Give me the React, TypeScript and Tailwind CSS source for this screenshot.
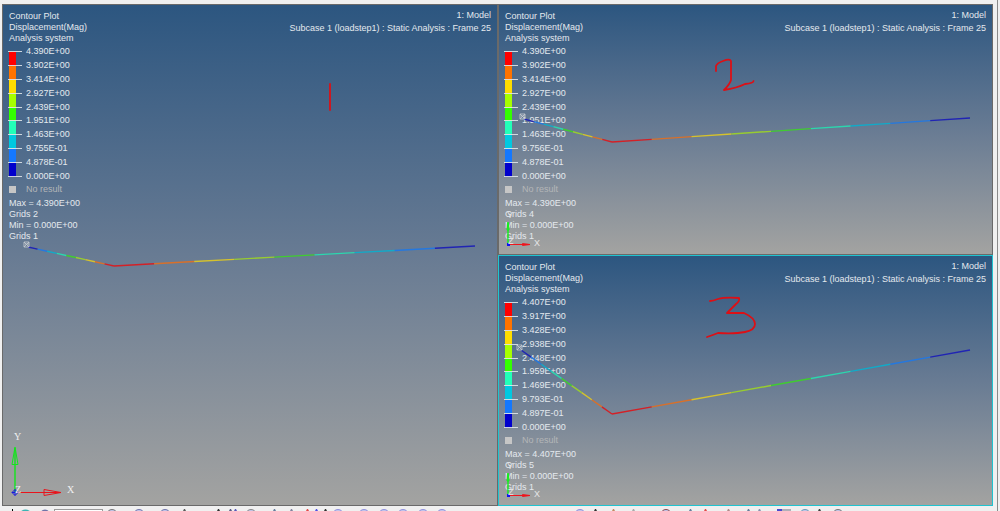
import { clsx } from 'clsx';

type Point = [number, number];

interface Axis {
  size: 'large' | 'small';
}

interface ViewportProps {
  levels: string[];
  max: string;
  maxGrid: string;
  min: string;
  minGrid: string;
  box: Point;
  curve: [Point, Point, Point];
  note: string;
  axis: Axis['size'];
  active?: boolean;
  className?: string;
}

const bands = [
  'bg-[#ff0000]',
  'bg-[#ff7300]',
  'bg-[#ffdd00]',
  'bg-[#a6ff00]',
  'bg-[#33ff00]',
  'bg-[#22ffb8]',
  'bg-[#00c8e0]',
  'bg-[#1478ff]',
  'bg-[#0000cc]',
];

// line colours, highest displacement first
const strokes = ['#d42026', '#d8702a', '#d6c22c', '#98cc30', '#40cc30', '#2cd6ae', '#12aac8', '#2478e0', '#2024b4'];

function Legend({ levels }: { levels: string[] }) {
  return (
    <div className="flex h-[139px] pt-px">
      <div className="relative -ml-px w-3.5">
        <div className="mt-[7px] ml-px flex h-[125px] w-[7px] flex-col">
          {bands.map((band) => (
            <div key={band} className={clsx('flex-1', band)} />
          ))}
        </div>
        <div className="absolute inset-x-0 top-[6px] flex h-[126px] flex-col justify-between">
          {levels.map((level) => (
            <div key={level} className="h-px bg-[#dfe4e8]/90" />
          ))}
        </div>
      </div>
      <ul className="ml-1 flex flex-col justify-between leading-[13px]">
        {levels.map((level) => (
          <li key={level}>{level}</li>
        ))}
      </ul>
    </div>
  );
}

function Curve({ box, curve, note }: { box: Point; curve: [Point, Point, Point]; note: string }) {
  const [start, low, end] = curve;
  const segments = [start, end].flatMap(([x, y]) =>
    strokes.map((color, i) => {
      const a = i / strokes.length;
      const b = (i + 1) / strokes.length;
      return {
        color,
        x1: low[0] + (x - low[0]) * a,
        y1: low[1] + (y - low[1]) * a,
        x2: low[0] + (x - low[0]) * b,
        y2: low[1] + (y - low[1]) * b,
      };
    }),
  );

  return (
    <svg
      className="absolute inset-0 h-full w-full"
      viewBox={`0 0 ${box[0]} ${box[1]}`}
      preserveAspectRatio="none"
      fill="none"
      aria-hidden="true"
    >
      {segments.map(({ color, ...line }, i) => (
        <line key={i} {...line} stroke={color} strokeWidth="1.4" />
      ))}
      {/* Constraint marker */}
      <g transform={`translate(${start[0]} ${start[1]})`} stroke="#c9cdd2" strokeWidth="0.8">
        <path d="M-4 -5 L1 0 M1 -5 L-4 0 M-4 -5 H1 M-4 0 H1 M-4 -5 V0 M1 -5 V0 M-3 -3 H1" />
      </g>
      <path d={note} stroke="#dc1016" strokeWidth="1.8" strokeLinecap="round" strokeLinejoin="round" />
    </svg>
  );
}

function AxisTriad({ size }: Axis) {
  if (size === 'large') {
    return (
      <svg className="absolute bottom-0 left-0 h-20 w-24 font-['Liberation_Serif',serif]" viewBox="0 0 96 80" fill="none" aria-hidden="true">
        <path d="M12 67 V23" stroke="#12e61c" strokeWidth="1.4" />
        <path d="M12 22 L9 39.5 H15 Z" stroke="#12e61c" strokeLinejoin="round" />
        <path d="M12 67.5 H41 M41 64.5 L58 67.5 L41 70.5 Z M41 67.5 H57" stroke="#e8141c" />
        <path d="M12 64.5 L15 67.5 L12 70.5 L9 67.5 Z M9 67.5 H15 M12 64.5 V70.5" stroke="#1818e0" />
        <g fill="#f0f0f0" fontSize="10">
          <text x="11" y="15">Y</text>
          <text x="12" y="68">Z</text>
          <text x="64" y="68">X</text>
        </g>
      </svg>
    );
  }

  return (
    <svg className="absolute bottom-0 left-0 h-11 w-12" viewBox="0 0 48 44" fill="none" aria-hidden="true">
      <path d="M9 34 V13" stroke="#12f01c" strokeWidth="1.4" />
      <path d="M9 12 L8 20 H10 Z" stroke="#12f01c" strokeLinejoin="round" />
      <path d="M9 34.5 H31 M23.5 33.5 L31 34.5 L23.5 35.5 Z" stroke="#f0141c" />
      <rect x="8" y="33" width="3" height="3" fill="#1010f0" />
      <g fill="#e6e6e6" fontSize="9">
        <text x="8" y="8">Y</text>
        <text x="9" y="34">Z</text>
        <text x="35" y="36">X</text>
      </g>
    </svg>
  );
}

function Viewport({ levels, max, maxGrid, min, minGrid, box, curve, note, axis, active, className }: ViewportProps) {
  return (
    <section
      className={clsx(
        'relative overflow-hidden border bg-linear-to-b from-[#2c5680] via-[#687b93] to-[#a3a3a1] px-1.5 pt-[5px] text-[9px] leading-[11px] whitespace-nowrap text-[#e4e9ee]',
        active ? 'border-[#20c4d0]' : 'border-[#6a6a6a]',
        className,
      )}
    >
      <div className="flex justify-between">
        <div className="pt-px">
          <h2>Contour Plot</h2>
          <p>Displacement(Mag)</p>
          <p>Analysis system</p>
        </div>
        <div className="text-right">
          <p>1: Model</p>
          <p className="mt-0.5">Subcase 1 (loadstep1) : Static Analysis : Frame 25</p>
        </div>
      </div>

      <Legend levels={levels} />

      <div className="mt-px flex items-center gap-2.5 text-[#b4b6b8]">
        <span className="h-[7px] w-[7px] bg-[#c6c6c6]" />
        <span>No result</span>
      </div>

      <div className="mt-[3px]">
        <p>Max = {max}</p>
        <p>Grids {maxGrid}</p>
        <p>Min = {min}</p>
        <p>Grids {minGrid}</p>
      </div>

      <Curve box={box} curve={curve} note={note} />
      <AxisTriad size={axis} />
    </section>
  );
}

const arcs = [
  { x: 112, color: '#777777' },
  { x: 139, color: '#7074a8' },
  { x: 165, color: '#7074a8' },
  { x: 251, color: '#888888' },
  { x: 338, color: '#9090dc' },
  { x: 364, color: '#9090dc' },
  { x: 384, color: '#9090dc' },
  { x: 403, color: '#9090dc' },
  { x: 423, color: '#9090dc' },
  { x: 442, color: '#9090dc' },
  { x: 580, color: '#9090dc' },
  { x: 666, color: '#8c4a50' },
  { x: 805, color: '#6c9cb4' },
  { x: 838, color: '#777777' },
];

const tips = [
  { x: 184, color: '#333333' },
  { x: 218, color: '#000000' },
  { x: 230, color: '#333366' },
  { x: 235, color: '#3333aa' },
  { x: 274, color: '#446088' },
  { x: 291, color: '#666688' },
  { x: 307, color: '#e02020' },
  { x: 316, color: '#2828e0' },
  { x: 325, color: '#000000' },
  { x: 595, color: '#000000' },
  { x: 613, color: '#b87040' },
  { x: 633, color: '#999999' },
  { x: 690, color: '#446088' },
  { x: 705, color: '#e02020' },
  { x: 728, color: '#a07070' },
  { x: 748, color: '#446088' },
  { x: 759, color: '#7078a0' },
  { x: 819, color: '#111111' },
];

function Toolbar() {
  return (
    <footer className="flex h-[5px] shrink-0 overflow-hidden bg-[#f0f0f0]">
      <svg className="h-[5px] w-[54px] shrink-0" viewBox="0 0 54 5" fill="none" aria-hidden="true">
        <rect x="12" y="3" width="1" height="2" fill="#000" />
        <ellipse cx="25.5" cy="7" rx="5" ry="3.5" fill="#3cb4b4" />
        <ellipse cx="45" cy="7" rx="4" ry="3.5" fill="#7074a8" />
      </svg>
      <input
        type="text"
        aria-label="Value"
        className="mt-[3px] h-4 w-[49px] shrink-0 border border-[#9a9a9a] bg-white px-1 text-[9px]"
      />
      <svg className="h-[5px] w-[760px] shrink-0" viewBox="103 0 760 5" fill="none" aria-hidden="true">
        {arcs.map(({ x, color }) => (
          <ellipse key={x} cx={x} cy="8" rx="5" ry="4.5" fill="#c4c8ee" stroke={color} />
        ))}
        {tips.map(({ x, color }) => (
          <path key={x} d={`M${x} 3 h1 l1 2 h-3 Z`} fill={color} opacity="0.8" />
        ))}
        <rect x="777" y="3" width="5" height="2" fill="#4848d0" />
        <rect x="782" y="3" width="9" height="2" fill="#b0b0b8" />
      </svg>
    </footer>
  );
}

const lowLevels = ['4.390E+00', '3.902E+00', '3.414E+00', '2.927E+00', '2.439E+00', '1.951E+00', '1.463E+00'];

export default function App() {
  return (
    <div className="h-screen overflow-hidden bg-[#f0f0f0] pr-0.5 font-['Liberation_Sans',Arial,sans-serif]">
      <div className="flex h-full flex-col border-r border-[#8a8a8a]">
        <main className="grid min-h-0 flex-1 grid-cols-[496fr_495fr] grid-rows-2 pt-1 pr-1 pl-0.5">
          <Viewport
            className="row-span-2"
            levels={[...lowLevels, '9.755E-01', '4.878E-01', '0.000E+00']}
            max="4.390E+00"
            maxGrid="2"
            min="0.000E+00"
            minGrid="1"
            box={[494, 500]}
            curve={[[25, 242], [111, 261], [472, 241]]}
            note="M327 79 V105"
            axis="large"
          />
          <Viewport
            levels={[...lowLevels, '9.756E-01', '4.878E-01', '0.000E+00']}
            max="4.390E+00"
            maxGrid="4"
            min="0.000E+00"
            minGrid="1"
            box={[493, 249]}
            curve={[[25, 114], [113, 137], [471, 113]]}
            note="M217 66 V61 Q218 58 224 56 Q231 53.5 232 56 L232 75 Q231 79 225 85 Q238 83 246 79 Q255 78 254.5 76"
            axis="small"
          />
          <Viewport
            active
            levels={[
              '4.407E+00',
              '3.917E+00',
              '3.428E+00',
              '2.938E+00',
              '2.448E+00',
              '1.959E+00',
              '1.469E+00',
              '9.793E-01',
              '4.897E-01',
              '0.000E+00',
            ]}
            max="4.407E+00"
            maxGrid="5"
            min="0.000E+00"
            minGrid="1"
            box={[493, 249]}
            curve={[[22, 94], [113, 158], [471, 94]]}
            note="M211 45 Q214 45 219 43 Q226 41 240 42 Q241 45 237 48 L228 57 L245 57 Q256 62 256 68 Q256 74 246 76 Q236 78 219 77 Q214 79 208 81"
            axis="small"
          />
        </main>
        <Toolbar />
      </div>
    </div>
  );
}
